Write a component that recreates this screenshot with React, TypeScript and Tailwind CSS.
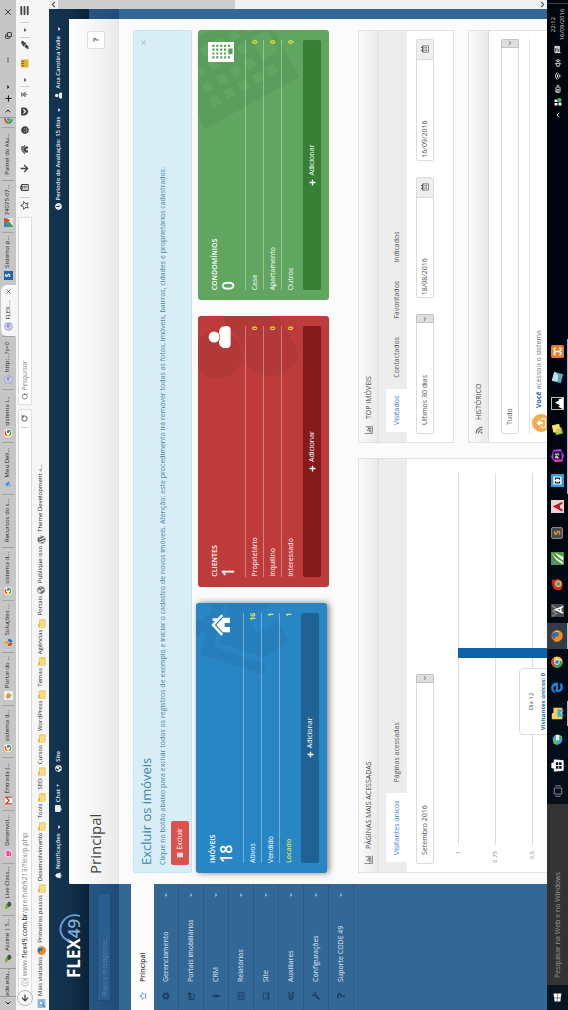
import React from "react";
import {
  FaBell, FaCaretDown, FaChartBar, FaClock, FaCog, FaCogs, FaCommentAlt, FaEdgeLegacy, FaGlobeAmericas, FaHome,
  FaLaptop, FaMale, FaPlus, FaQuestion, FaRegCalendarAlt, FaRegListAlt, FaRegStar, FaRss, FaTrashAlt, FaUser, FaWindows,
  FaWordpress, FaWrench, FaArrowDown, FaArrowLeft, FaShareSquare, FaSmile, FaGetPocket, FaEyeDropper, FaThumbtack,
} from "react-icons/fa";
import { FcGoogle } from "react-icons/fc";
import {
  BatteryMedium, ChevronDown, ChevronLeft, ChevronRight, ChevronUp, ClipboardList, Copy, Info, Menu, MessageSquareText, Minus,
  Plus, RotateCw, Search, Volume2, Wifi, X,
} from "lucide-react";

type Children = { children?: React.ReactNode };

function Svg({ className, children }: Children & { className: string }) {
  return (
    <svg viewBox="0 0 16 16" className={className} aria-hidden="true">
      {children}
    </svg>
  );
}

const Folder = () => (
  <Svg className="size-[9px]">
    <path d="M1 2h6l1 2h7v11H1z" fill="#e0b83c" />
    <path d="M2 5h12v9H2z" fill="#f5dd80" />
  </Svg>
);

const BarsIcon = () => (
  <Svg className="size-[9px]">
    <path d="M1 1v14h14" fill="none" stroke="#777" strokeWidth="1.500" />
    <path d="M4 9v4M7 5v8M10 7v6M13 3v10" stroke="#777" strokeWidth="2" />
  </Svg>
);

const FirefoxIcon = ({ className }: { className: string }) => (
  <Svg className={className}>
    <circle cx="8" cy="8" r="7.5" fill="#e66a17" />
    <circle cx="9" cy="6.5" r="5" fill="#2b6fb5" />
    <path d="M1 4c1 1 2 1 4 1 2 0 4 2 2 3 1 3 5 3 7 0 1-2 0-4-1-5 4 3 3 8 0 11-4 3-9 1-11-2C0 9 0 6 1 4z" fill="#f28a1c" />
    <path d="M12 2c3 3 4 7 1 10 1-4 0-7-1-10z" fill="#fbc93d" />
  </Svg>
);

const ChromeIcon = ({ className }: { className: string }) => (
  <Svg className={className}>
    <circle cx="8" cy="8" r="7.5" fill="#fbcf3b" />
    <path d="M8 8 1.5 4.2A7.5 7.5 0 0 1 14.5 4.3H8z" fill="#df4435" />
    <path d="M8 8 1.5 4.2A7.5 7.5 0 0 0 8 15.5L11 9.500z" fill="#30a350" />
    <circle cx="8" cy="8" r="3.600" fill="#fff" />
    <circle cx="8" cy="8" r="2.800" fill="#3f84ee" />
  </Svg>
);

const Ring = () => (
  <Svg className="size-[9px]">
    <circle cx="8" cy="8" r="7" fill="#d4d4ee" stroke="#8285b8" />
    <path d="M4 10 8 5v6M9 6h3v5M9 8.500h3" stroke="#6568a6" fill="none" />
  </Svg>
);

const Sprout = () => (
  <Svg className="size-[9px]">
    <path d="M1 3c6-3 10 1 11 5C8 10 3 9 1 3z" fill="#7fae3c" />
    <path d="M5 8c5-4 8-2 10 1-2 5-8 6-10-1z" fill="#46543e" />
  </Svg>
);

type Tab = { label: string; icon?: React.ReactNode; active?: boolean };

const tabs: Tab[] = [
  { label: "Assine | S...", icon: <Sprout /> },
  { label: "Live Class...", icon: <Sprout /> },
  {
    label: "Desenvol...",
    icon: (
      <Svg className="size-[9px]">
        <circle cx="8" cy="8" r="7.500" fill="#f7c6dc" />
        <path d="M5 11c4 2 7-2 6-6-4 0-7 2-6 6zM4 5l4 4" stroke="#d8347c" strokeWidth="2" fill="none" />
      </Svg>
    ),
  },
  {
    label: "Entrada (...",
    icon: (
      <Svg className="size-[9px]">
        <path d="M1 3h14v11H1z" fill="#fff" />
        <path d="M2 14V4l6 5 6-5v10" stroke="#d5392c" strokeWidth="2.500" fill="none" />
      </Svg>
    ),
  },
  { label: "sistema d...", icon: <FcGoogle className="size-2 rounded-full bg-white" /> },
  {
    label: "Portal do ...",
    icon: (
      <Svg className="size-[9px]">
        <path d="M0 0h16v16H0z" fill="#f4efe0" />
        <path d="m2 6 5-3 6 4-4 7-4-3z" fill="#c3a55c" />
      </Svg>
    ),
  },
  {
    label: "Soluções ...",
    icon: (
      <Svg className="size-[9px]">
        <path d="M8 0c4 5 3 8 0 9C5 8 5 5 8 0z" fill="#e9a21d" />
        <path d="M2 7c5 0 6 3 5 8-4-1-6-3-5-8z" fill="#d9472b" />
        <path d="M14 7c-5 0-6 3-5 8 4-1 6-3 5-8z" fill="#2973c7" />
      </Svg>
    ),
  },
  { label: "sistema d...", icon: <FcGoogle className="size-2 rounded-full bg-white" /> },
  { label: "Recursos do s..." },
  {
    label: "Meu Deli...",
    icon: (
      <Svg className="size-[9px]">
        <path d="m4 6 5-4 5 7-4 1z" fill="#3f92dd" />
        <path d="m3 8 5 2-2 4z" fill="#76b5ec" />
      </Svg>
    ),
  },
  { label: "sistema i...", icon: <FcGoogle className="size-2 rounded-full bg-white" /> },
  { label: "http:...?s=0", icon: <Ring /> },
  { label: "FLEX ...", icon: <Ring />, active: true },
  {
    label: "Sistema p...",
    icon: <span className="flex size-[9px] items-center justify-center bg-[#1d64a8] text-[7px] font-bold text-white">S</span>,
  },
  {
    label: "74075-07...",
    icon: (
      <Svg className="size-[9px]">
        <path d="M0 0h16v16H0z" fill="#45a254" />
        <path d="M0 9 9 0H0z" fill="#3f7de0" />
        <path d="m2 16 14-13v13z" fill="#e9e5dc" />
        <path d="M9 1h6v5l-3 5-3-5z" fill="#dd4232" />
      </Svg>
    ),
  },
  { label: "Painel do Alu..." },
];

function TabStrip() {
  return (
    <div className="flex h-4 items-stretch bg-[#c6c6c6] text-[#222]">
      <button aria-label="Rolar abas" className="flex w-[13px] items-center justify-center">
        <ChevronLeft className="size-2" strokeWidth={3} />
      </button>
      <div className="flex w-[29px] items-center justify-center border-x border-[#999]">ade.edu...</div>
      <div className="flex min-w-0 flex-1">
        {tabs.map((t, i) => (
          <div
            key={i}
            className={
              t.active
                ? "mt-px flex min-w-0 flex-1 items-center gap-[3px] rounded-t-md bg-[#f6f6f6] pl-[5px]"
                : "my-0.5 flex min-w-0 flex-1 items-center gap-[3px] border-r border-[#a4a4a4] pl-[5px]"
            }
          >
            {t.icon}
            <span className="whitespace-nowrap">{t.label}</span>
            {t.active && <X className="ml-0.5 size-[7px]" />}
          </div>
        ))}
      </div>
      <div className="flex w-[9px] items-center overflow-hidden pl-[3px]">
        <ChromeIcon className="size-[9px] shrink-0" />
      </div>
      <div className="flex w-[118px] items-center border-l border-[#999]">
        <button aria-label="Próximas abas" className="flex w-3 justify-center">
          <ChevronRight className="size-2" strokeWidth={3} />
        </button>
        <button aria-label="Nova aba" className="flex w-3 justify-center">
          <Plus className="size-[9px]" strokeWidth={3} />
        </button>
        <button aria-label="Listar abas" className="flex w-3 justify-center">
          <FaCaretDown className="size-1.5" />
        </button>
        <span className="flex-1" />
        <button aria-label="Minimizar" className="flex w-6 justify-center">
          <Minus className="size-2" />
        </button>
        <button aria-label="Restaurar" className="flex w-6 justify-center">
          <Copy className="size-[7px]" strokeWidth={3} />
        </button>
        <button aria-label="Fechar" className="flex w-6 justify-center">
          <X className="size-[10px]" />
        </button>
      </div>
    </div>
  );
}

function NavBar() {
  return (
    <div className="flex h-[17px] items-center bg-[#f6f6f6] text-[#444]">
      <button
        aria-label="Voltar"
        className="z-10 ml-1 -mr-1 flex size-4 items-center justify-center rounded-full border border-[#b5b5b5] bg-[#fafafa]"
      >
        <FaArrowLeft className="size-2" />
      </button>
      <div className="flex h-3.5 flex-1 items-center border border-[#dedede] bg-white pl-1.5">
        <Info className="size-2 text-[#999]" />
        <span className="border-l border-[#ccc] pl-0.5 text-[7px] text-[#888]">
          www.<b className="font-normal text-[#111]">flex49.com.br</b>/pre/hab9213/flex/p.php
        </span>
        <button aria-label="Atualizar" className="ml-auto flex w-[18px] items-center justify-center border-l border-[#ccc]">
          <RotateCw className="size-[7px]" strokeWidth={3} />
        </button>
      </div>
      <label className="ml-1 flex h-3.5 w-[188px] items-center border border-[#dedede] bg-white pl-1">
        <Search className="size-2" />
        <input aria-label="Pesquisar" placeholder="Pesquisar" className="ml-0.5 w-full text-[7px] italic outline-none placeholder:text-[#888]" />
      </label>
      <div className="ml-1 flex items-center [&>button]:flex [&>button]:h-2.5 [&>button]:items-center [&>button]:justify-center">
        <button aria-label="Favoritar" className="w-4 border-r border-[#ccc]"><FaRegStar className="size-[9px]" /></button>
        <button aria-label="Lista" className="w-[19px]"><ClipboardList className="size-[9px]" strokeWidth={3} /></button>
        <button aria-label="Downloads" className="w-[19px]"><FaArrowDown className="size-[9px]" /></button>
        <button aria-label="Início" className="w-[19px]"><FaHome className="size-[9px]" /></button>
        <button aria-label="Hello" className="w-[19px]"><FaSmile className="size-2" /></button>
        <button aria-label="Pocket" className="w-[19px]"><FaGetPocket className="size-[9px]" /></button>
        <button aria-label="Extensão" className="w-4 border-r border-[#ccc]"><FaThumbtack className="size-[7px] text-[#888]" /></button>
        <button aria-label="Opções da extensão" className="w-3"><FaCaretDown className="size-1.5" /></button>
        <button aria-label="Régua" className="w-[21px]">
          <Svg className="size-[9px]">
            <path d="M1 2h14v13H1z" fill="#e3ae35" />
            <path d="M4 2v5M8 2v5M12 2v5" stroke="#7b5a10" strokeWidth="1.500" />
          </Svg>
        </button>
        <button aria-label="Conta-gotas" className="w-4 border-r border-[#ccc]"><FaEyeDropper className="size-2" /></button>
        <button aria-label="Opções de cor" className="w-[15px] border-r border-[#ccc]"><FaCaretDown className="size-1.5" /></button>
        <button aria-label="Menu" className="w-[22px]"><Menu className="size-[11px]" strokeWidth={4} /></button>
      </div>
    </div>
  );
}

const bookmarks: { label: string; icon?: React.ReactNode }[] = [
  {
    label: "Mais visitados",
    icon: (
      <Svg className="size-[9px]">
        <path d="M0 1h16v14H0z" fill="#8fbbe0" />
        <circle cx="9" cy="7" r="3.500" fill="#e8f2fa" stroke="#3a6ea5" />
        <path d="m6 10-4 4" stroke="#3a6ea5" strokeWidth="2" />
      </Svg>
    ),
  },
  { label: "Primeiros passos", icon: <FirefoxIcon className="size-[9px]" /> },
  { label: "Desenvolvimento" },
  { label: "Tools" },
  { label: "SEO" },
  { label: "Cursos" },
  { label: "WordPress" },
  { label: "Temas" },
  { label: "Agências" },
  { label: "Portais" },
  { label: "Publique isso", icon: <FaGlobeAmericas className="size-2 text-[#777]" /> },
  { label: "Theme Development «...", icon: <FaWordpress className="size-[9px] text-[#555]" /> },
];

function Bookmarks() {
  return (
    <nav className="flex h-4 items-center gap-0.5 bg-[#f6f6f6] px-0.5 text-[#222]">
      {bookmarks.map((b) => (
        <a key={b.label} href="#" className="flex items-center gap-[3px] whitespace-nowrap">
          {b.icon ?? <Folder />}
          {b.label}
        </a>
      ))}
    </nav>
  );
}

const menu = [
  { label: "Gerenciamento", Icon: FaCog },
  { label: "Portais imobiliários", Icon: FaShareSquare },
  { label: "CRM", Icon: FaMale },
  { label: "Relatórios", Icon: FaRegListAlt },
  { label: "Site", Icon: FaLaptop },
  { label: "Auxiliares", Icon: FaCogs },
  { label: "Configurações", Icon: FaWrench },
  { label: "Suporte CODE 49", Icon: FaQuestion },
];

function Sidebar() {
  return (
    <aside className="w-[126px] shrink-0 text-[7px]">
      <div className="flex h-10 items-end pl-8">
        <svg viewBox="0 0 66 30" className="h-[30px] w-[66px] overflow-visible" role="img" aria-label="FLEX49">
          <text x="0" y="21" fontFamily="Open Sans, sans-serif" fontSize="17" fontWeight="700" fill="#fff">
            FLEX
            <tspan fontWeight="600" fill="#86aed6">49</tspan>
          </text>
          <path d="M37 11C39 3 47-1 55 3c7 4 9 11 7 18" fill="none" stroke="#6f9fd0" strokeWidth="1.800" />
        </svg>
      </div>
      <div className="h-[30px] px-[9px] pt-2">
        <input
          aria-label="Busca Inteligente"
          placeholder="Busca Inteligente..."
          className="block h-3.5 w-full border border-[#1e4a76] bg-[#2a5d90] px-1 text-[7px] text-white outline-none placeholder:text-[#5580a8]"
        />
      </div>
      <nav className="pt-3 text-[#e1eaf3]">
        <a href="#" className="flex h-[23px] items-center bg-[#fbfbfb] pl-2.5 font-semibold text-[#444]">
          <FaRegStar className="size-2 text-[#4b85c8]" />
          <span className="ml-2.5">Principal</span>
        </a>
        {menu.map(({ label, Icon }) => (
          <a key={label} href="#" className="flex h-[25px] items-center border-b border-[#2b5a8a] pr-2 pl-2.5">
            <Icon className="size-2 text-[#1b4066]" />
            <span className="ml-2.5">{label}</span>
            <FaCaretDown className="ml-auto size-1.5 text-[#9db9d6]" />
          </a>
        ))}
      </nav>
    </aside>
  );
}

function TopBar() {
  return (
    <div className="flex h-5 items-center pr-[7px] pl-[5px] text-[6px] font-semibold text-[#e6edf3]">
      <a href="#" className="flex items-center gap-[3px]"><FaBell className="size-[7px]" />Notificações<FaCaretDown className="size-1.5" /></a>
      <a href="#" className="ml-3 flex items-center gap-[3px]"><FaCommentAlt className="size-[7px]" />Chat +</a>
      <a href="#" className="ml-3 flex items-center gap-[3px]"><FaGlobeAmericas className="size-[7px]" />Site</a>
      <a href="#" className="ml-auto flex items-center gap-[3px]"><FaClock className="size-[7px]" />Período de Avaliação: 15 dias<FaCaretDown className="ml-px size-1.5" /></a>
      <a href="#" className="ml-2 flex items-center gap-[3px]"><FaUser className="size-[7px]" />Ana Carolina Valle<FaCaretDown className="ml-px size-1.5" /></a>
    </div>
  );
}

const HouseShape = () => (
  <>
    <path d="M8 1 0 8.500l1.200 1.300L8 3.600l6.800 6.200L16 8.500l-3-2.800V2h-2v1.800z" />
    <path d="M8 4.800 2.500 9.800V15h4v-4h3v4h4V9.800z" />
  </>
);
const UserShape = () => (
  <>
    <circle cx="8" cy="4" r="4" />
    <path d="M0 13c0-4 2-5.500 5-5.500 2 1.300 4 1.300 6 0 3 0 5 1.500 5 5.500 0 2-1 3-3 3H3c-2 0-3-1-3-3z" />
  </>
);
const BuildingShape = () => (
  <path
    fillRule="evenodd"
    d="M1 0h14v18H1zM3.500 3v1.500h1.500V3zM6.200 3v1.500h1.500V3zM8.900 3v1.500h1.500V3zM11.500 3v1.500H13V3zM3.500 5.700v1.500h1.500V5.700zM6.200 5.700v1.500h1.500V5.700zM8.900 5.700v1.500h1.500V5.700zM11.500 5.700v1.500H13V5.700zM3.500 8.400v1.500h1.500V8.400zM6.200 8.400v1.500h1.500V8.400zM8.900 8.400v1.500h1.500V8.400zM11.500 8.400v1.500H13V8.400zM3.500 11.100v1.500h1.500v-1.500zM6.200 11.100v1.500h1.500v-1.500zM8.900 11.100v1.500h1.500v-1.500zM11.500 11.100v1.500H13v-1.500zM3.500 13.800v1.500h1.500v-1.500zM6.500 14v3h4v-3zM11.500 13.800v1.500H13v-1.500z"
  />
);

type CardProps = {
  title: string;
  total: number;
  rows: [string, number][];
  tone: string;
  button: string;
  shape: React.ReactNode;
  markClass: string;
  iconClass: string;
  highlight?: boolean;
};

function StatCard({ title, total, rows, tone, button, shape, markClass, iconClass, highlight }: CardProps) {
  return (
    <section className={`relative h-[131px] flex-1 overflow-hidden rounded-[3px] px-2.5 pt-2.5 text-[7px] text-white ${tone}`}>
      <svg viewBox="0 0 16 18" className={`absolute -rotate-[29deg] fill-black/5 ${markClass}`} aria-hidden="true">
        {shape}
      </svg>
      <div className="relative flex h-[37px] justify-between">
        <div>
          <h3 className="text-[7px] leading-[13px] font-semibold">{title}</h3>
          <p className="text-[16px] leading-[14px] font-semibold">{total}</p>
        </div>
        <svg viewBox="0 0 16 18" className={`fill-white ${iconClass}`} aria-hidden="true">
          {shape}
        </svg>
      </div>
      <dl className="relative">
        {rows.map(([label, n], i) => (
          <div key={label} className="flex h-[18px] items-center justify-between border-t border-white/35">
            <dt className={highlight && i === 2 ? "font-semibold text-[#d5e04c]" : ""}>{label}</dt>
            <dd className="font-bold text-[#e6e03a]">{n}</dd>
          </div>
        ))}
      </dl>
      <button className={`relative mt-1 flex h-[18px] w-full items-center justify-center gap-[3px] rounded-[2px] ${button}`}>
        <FaPlus className="size-[7px]" />
        Adicionar
      </button>
    </section>
  );
}

function Panel({ title, icon, className, children }: Children & { title: string; icon: React.ReactNode; className: string }) {
  return (
    <section className={`flex flex-col border border-[#e2e2e2] bg-white ${className}`}>
      <h3 className="flex h-5 shrink-0 items-center gap-1.5 border-b border-[#dcdcdc] bg-linear-to-b from-[#fbfbfb] to-[#e9e9e9] pl-2 text-[7px] text-[#444]">
        {icon}
        {title}
      </h3>
      {children}
    </section>
  );
}

function PanelTabs({ items }: { items: string[] }) {
  return (
    <div role="tablist" className="flex h-7 shrink-0 items-end gap-1 bg-[#ededed] pl-2.5 text-[7px] text-[#555]">
      {items.map((t, i) => (
        <button
          key={t}
          role="tab"
          aria-selected={i === 0}
          className={i === 0 ? "h-[21px] rounded-t-[2px] bg-white px-[7px] text-[#2f7bd0]" : "h-[21px] px-[7px]"}
        >
          {t}
        </button>
      ))}
    </div>
  );
}

function Select({ label, value, className }: { label: string; value: string; className: string }) {
  return (
    <div className={`relative h-[18px] ${className}`}>
      <select
        aria-label={label}
        className="block h-full w-full appearance-none rounded-[2px] border border-[#dcdcdc] bg-white pl-2 text-[7px] text-[#555] outline-none"
      >
        <option>{value}</option>
      </select>
      <span className="pointer-events-none absolute inset-y-0 right-0 flex w-[9px] items-center justify-center rounded-r-[2px] border border-[#c2c2c2] bg-[#dedede]">
        <ChevronDown className="size-1.5 text-[#444]" strokeWidth={3} />
      </span>
    </div>
  );
}

function DateField({ label, value }: { label: string; value: string }) {
  return (
    <div className="flex h-[18px] flex-1 rounded-[2px] border border-[#dcdcdc]">
      <input aria-label={label} defaultValue={value} className="w-0 flex-1 pl-0.5 text-[7px] text-[#555] outline-none" />
      <button aria-label="Abrir calendário" className="flex w-5 items-center justify-center border-l border-[#dcdcdc] bg-[#eee]">
        <FaRegCalendarAlt className="size-2 text-[#666]" />
      </button>
    </div>
  );
}

function PagesChart() {
  return (
    <div className="relative mt-[17px] pr-3.5 text-[6px] text-[#888]">
      {["1", "0.75", "0.5"].map((t) => (
        <div key={t} className="flex h-[37px]">
          <span className="-mt-1 w-[27px] pr-1.5 text-right leading-[8px]">{t}</span>
          <span className="flex-1 border-t border-[#dedede]" />
        </div>
      ))}
      <div className="absolute top-0 left-[214px] h-[120px] w-2.5 bg-[#0d62a8]" />
      <div className="absolute top-[61px] left-[137px] h-10 w-[67px] rounded-[4px] border border-[#ddd] bg-white pt-[5px] text-center">
        <p className="leading-[12px] text-[#444]">Dia 12</p>
        <p className="leading-[12px] font-bold whitespace-nowrap text-[#2b6ba8]">Visitantes únicos: 0</p>
      </div>
    </div>
  );
}

function Main() {
  return (
    <main className="flex min-h-0 flex-1 flex-col overflow-hidden rounded-tl-[2px] bg-[#fbfbfb]">
      <header className="flex h-[50px] shrink-0 items-center justify-between border-b border-[#e6e6e6] bg-linear-to-b from-white to-[#ebebeb] pr-3 pl-2.5">
        <h1 className="pt-1 text-[15px] text-[#444]">Principal</h1>
        <button aria-label="Ajuda" className="mt-1 flex size-[18px] items-center justify-center rounded-[2px] border border-[#ddd] bg-white">
          <FaQuestion className="size-1.5 text-[#777]" />
        </button>
      </header>
      <div className="flex min-h-0 flex-1 flex-col px-[11px] pt-3.5">
        <section className="relative h-[59px] shrink-0 rounded-[2px] border border-[#bce8f1] bg-[#d9edf7] pt-1 pl-[7px] text-[7px] text-[#3a87ad]">
          <h2 className="text-[13px] leading-[16px]">Excluir os imóveis</h2>
          <p className="mt-1 leading-[10px] whitespace-nowrap">
            Clique no botão abaixo para excluir todos os registros de exemplo e iniciar o cadastro de novos imóveis. Atenção: este
            procedimento irá remover todas as fotos, imóveis, bairros, cidades e proprietários cadastrados.
          </p>
          <button className="mt-[3px] flex h-[18px] w-11 items-center justify-center gap-0.5 rounded-[2px] bg-[#d9534f] text-[7px] text-white">
            <FaTrashAlt className="size-1.5" />
            Excluir
          </button>
          <button aria-label="Fechar aviso" className="absolute top-1.5 right-2 text-[#9aaab2]">
            <X className="size-[7px]" strokeWidth={3} />
          </button>
        </section>
        <div className="mt-1.5 flex shrink-0 gap-4">
          <StatCard
            title="IMÓVEIS"
            total={18}
            rows={[["Ativos", 16], ["Vendido", 1], ["Locado", 1]]}
            tone="-mt-0.5 bg-[#2986c4] shadow-[0_2px_6px_rgba(0,0,0,0.5)]"
            button="bg-[#206393]"
            shape={<HouseShape />}
            markClass="-top-2 right-[-20px] h-[108px] w-24"
            iconClass="mt-1 h-6 w-6"
            highlight
          />
          <StatCard
            title="CLIENTES"
            total={1}
            rows={[["Proprietário", 0], ["Inquilino", 0], ["Interessado", 0]]}
            tone="bg-[#bd3b3b]"
            button="bg-[#841b1b]"
            shape={<UserShape />}
            markClass="-top-2 right-[-24px] h-[108px] w-24"
            iconClass="h-[26px] w-[22px]"
          />
          <StatCard
            title="CONDOMÍNIOS"
            total={0}
            rows={[["Casa", 0], ["Apartamento", 0], ["Outros", 0]]}
            tone="bg-[#60a661]"
            button="bg-[#367f35]"
            shape={<BuildingShape />}
            markClass="-top-5 right-[-12px] h-[108px] w-24"
            iconClass="h-[26px] w-6"
          />
        </div>
        <div className="mt-[29px] flex min-h-0 flex-1 gap-[15px]">
          <Panel title="PÁGINAS MAIS ACESSADAS" icon={<BarsIcon />} className="flex-1 border-b-0">
            <PanelTabs items={["Visitantes únicos", "Páginas acessadas"]} />
            <div className="px-2 pt-[9px]">
              <Select label="Período" value="Setembro 2016" className="w-[190px]" />
            </div>
            <div className="pt-[7px]"><PagesChart /></div>
          </Panel>
          <div className="flex min-h-0 flex-1 flex-col gap-3.5">
            <Panel title="TOP IMÓVEIS" icon={<BarsIcon />} className="h-24 shrink-0">
              <PanelTabs items={["Visitados", "Contactados", "Favoritados", "Indicados"]} />
              <div className="flex gap-4 px-2 pt-[9px]">
                <Select label="Intervalo" value="Últimos 30 dias" className="flex-1" />
                <DateField label="Data inicial" value="18/08/2016" />
                <DateField label="Data final" value="16/09/2016" />
              </div>
            </Panel>
            <Panel title="HISTÓRICO" icon={<FaRss className="size-2 text-[#777]" />} className="min-h-0 flex-1 border-b-0">
              <div className="px-2 pt-3">
                <Select label="Filtro" value="Tudo" className="w-full" />
                <div className="mt-2.5 flex items-center gap-1.5 border-t border-[#e4e4e4] pt-0.5 pl-0.5 text-[7px] text-[#777]">
                  <span className="flex size-[18px] items-center justify-center rounded-full bg-[#f0ad4e] text-white">
                    <Svg className="size-2.5">
                      <path d="M8 1 3 6h3v5h4V6h3z" fill="#fff" />
                      <path d="M4 9H1v6h14V9h-3" fill="none" stroke="#fff" strokeWidth="1.500" />
                    </Svg>
                  </span>
                  <p className="-mt-1">
                    <b className="text-[#2a6ba8]">Você</b> acessou o sistema
                  </p>
                </div>
              </div>
            </Panel>
          </div>
        </div>
      </div>
    </main>
  );
}

const square = "size-[13px]";

const apps: { name: string; icon: React.ReactNode; open?: boolean; active?: boolean }[] = [
  {
    name: "Loja",
    icon: (
      <Svg className={square}>
        <path d="M5 4V1h6v3M1 4h14l-1 11H2z" fill="#fff" stroke="#fff" />
        <path d="M4 6h3.500v3H4zM8.500 6H12v3H8.500zM4 10h3.500v3H4zM8.500 10H12v3H8.500z" fill="#07111c" />
      </Svg>
    ),
  },
  {
    name: "Rede",
    icon: (
      <Svg className={square}>
        <circle cx="8" cy="8" r="6" fill="#3aa0dc" />
        <path d="M3 3h5v5H1zM9 10l5-2-2 6z" fill="#5cc04a" />
        <path d="M7 6h7v4H7z" fill="#eaf4fb" />
      </Svg>
    ),
  },
  {
    name: "Explorador",
    open: true,
    icon: (
      <Svg className={square}>
        <path d="M1 1h7l1 2h6v11H1z" fill="#f5ce5b" />
        <path d="M4 8h9v7h-3v-3H7v3H4z" fill="#2fb2e8" />
      </Svg>
    ),
  },
  { name: "Edge", icon: <FaEdgeLegacy className="size-3 text-[#1e82e0]" /> },
  { name: "Chrome", icon: <ChromeIcon className="size-3" /> },
  { name: "Firefox", icon: <FirefoxIcon className="size-3" />, open: true, active: true },
  {
    name: "Awesomium",
    icon: (
      <Svg className={square}>
        <path d="M0 0h16v16H0z" fill="#4a4a4a" />
        <path d="m1 1 3 6 3-5 3 5 4-6" fill="none" stroke="#8d8d8d" strokeWidth="1.500" />
        <path d="m5 15 4-9 4 9M6.500 12h5" fill="none" stroke="#fff" strokeWidth="2" />
      </Svg>
    ),
  },
  {
    name: "Dragon",
    icon: (
      <Svg className={square}>
        <path d="M1 9C1 3 6 0 15 2c-3 1-1 3 0 6-1 5-6 7-9 6-3 0-5-2-5-5z" fill="#d32b2b" />
        <circle cx="9" cy="9" r="4" fill="#e8c24a" />
        <circle cx="9" cy="9" r="2.500" fill="#2fa7a0" />
      </Svg>
    ),
  },
  {
    name: "Corel",
    icon: (
      <Svg className={square}>
        <path d="M0 0h16v16H0z" fill="#4c9b3f" />
        <path d="M15 1C9 3 3 9 1 15l3-1C7 8 10 4 15 1zM15 5c-4 2-7 6-9 10h4z" fill="#fff" />
        <path d="M1 2h5L2 7z" fill="#4a8ed0" />
      </Svg>
    ),
  },
  {
    name: "Sublime",
    icon: (
      <span className="flex size-3 items-center justify-center rounded-[2px] border border-[#888] bg-[#4b4b4b] text-[9px] font-bold text-[#f09a33]">
        S
      </span>
    ),
  },
  {
    name: "AutoCAD",
    icon: (
      <Svg className={square}>
        <path d="M0 0h16v16H0z" fill="#ecd2d2" />
        <path d="M8 2 14 14h-3l-1-3H6l-1 3H2z" fill="#b31b25" />
      </Svg>
    ),
  },
  {
    name: "Brackets",
    open: true,
    icon: (
      <Svg className={square}>
        <path d="M0 0h16v16H0z" fill="#2b9ee0" />
        <path d="M3 3h10v10H3z" fill="#fff" />
        <path d="M7 5.500H5v5h2M9 5.500h2v5H9" stroke="#222" strokeWidth="1.500" fill="none" />
      </Svg>
    ),
  },
  {
    name: "PhpStorm",
    open: true,
    icon: (
      <Svg className={square}>
        <path d="m0 5 6-5 9 3 1 9-8 4-7-2z" fill="#a53cf0" />
        <path d="m0 5 5-4 3 6-7 8z" fill="#ec3fb0" />
        <path d="M3 3h10v10H3z" fill="#120a18" />
        <text x="4" y="9.500" fontSize="6" fontWeight="700" fill="#fff" fontFamily="Open Sans, sans-serif">PS</text>
      </Svg>
    ),
  },
  {
    name: "Notas",
    open: true,
    icon: (
      <Svg className={square}>
        <path d="m1 6 8-2 2 9-8 2z" fill="#63a844" />
        <path d="m4 3 9-2 2 9-9 2z" fill="#f2e26a" />
        <path d="m2 7 6-1 2 6-6 1z" fill="#d9c650" />
      </Svg>
    ),
  },
  {
    name: "Inkscape",
    open: true,
    icon: (
      <Svg className={square}>
        <path d="M.5.500h15v15H.5z" fill="#05080e" stroke="#fff" />
        <path d="m1 15 3-6 2 2 3-6 3 5 1-1 2 6z" fill="#fff" />
      </Svg>
    ),
  },
  {
    name: "Virtual",
    open: true,
    icon: (
      <Svg className={square}>
        <path d="m4 1 11 3-3 11L1 12z" fill="#5ba9bd" />
        <path d="m4 1 11 3-4 5-8-1z" fill="#c0e3ea" />
      </Svg>
    ),
  },
  {
    name: "XAMPP",
    open: true,
    icon: (
      <Svg className={square}>
        <rect width="16" height="16" rx="2" fill="#ec7a2c" />
        <path d="M4 4c2-1 4 0 4 4s2 5 4 4M12 4c-2-1-4 0-4 4s-2 5-4 4M4 4v2M12 4v2M4 12v-2M12 12v-2" stroke="#fff" strokeWidth="1.800" fill="none" />
      </Svg>
    ),
  },
];

function Taskbar() {
  return (
    <footer className="flex h-[21px] shrink-0 items-stretch bg-linear-to-r from-[#081622] to-[#01050d] to-60% text-white">
      <button aria-label="Iniciar" className="flex w-[25px] items-center justify-center">
        <FaWindows className="size-[9px]" />
      </button>
      <input
        aria-label="Pesquisar na Web e no Windows"
        placeholder="Pesquisar na Web e no Windows"
        className="w-[181px] bg-[#333] pl-[7px] text-[7px] outline-none placeholder:text-[#999]"
      />
      <button aria-label="Visão de tarefas" className="flex w-[26px] items-center justify-center">
        <Svg className="size-3">
          <path d="M4 3h8v10H4zM2 5H1v6h1M14 5h1v6h-1" fill="none" stroke="#aaa" />
        </Svg>
      </button>
      <div className="flex w-[439px]">
        {apps.map((a) => (
          <button
            key={a.name}
            aria-label={a.name}
            className={
              a.active
                ? "flex flex-1 items-center justify-center border-b border-[#9cc8ec] bg-[#333d47]"
                : a.open
                  ? "flex flex-1 items-center justify-center border-b border-[#8fbfe6]"
                  : "flex flex-1 items-center justify-center border-b border-transparent"
            }
          >
            {a.icon}
          </button>
        ))}
      </div>
      <div className="ml-auto flex items-center gap-[5px] text-[#ddd]">
        <ChevronUp className="size-2" strokeWidth={3} />
        <Svg className="size-2">
          <path d="M1 1h5v6H1zM8 1h5v6H8zM1 9h6v6H1z" fill="#eee" />
          <circle cx="12" cy="11" r="4" fill="#3fc157" />
        </Svg>
        <BatteryMedium className="size-2" strokeWidth={3} />
        <Wifi className="size-2" strokeWidth={3} />
        <Volume2 className="size-2" strokeWidth={3} />
        <MessageSquareText className="size-[9px] fill-white text-[#05080e]" />
      </div>
      <time className="mr-[3px] flex w-[42px] flex-col items-center justify-center border-r border-[#444] text-[6px] leading-[9px] text-[#ddd]">
        <span>22:12</span>
        <span>16/09/2016</span>
      </time>
    </footer>
  );
}

export default function App() {
  return (
    <div className="h-screen w-screen overflow-hidden bg-black">
      <div className="flex h-[100vw] w-[100vh] origin-top-left translate-y-[100vh] -rotate-90 flex-col font-['Open_Sans',sans-serif] text-[6px] leading-[1.3]">
        <TabStrip />
        <NavBar />
        <Bookmarks />
        <div className="flex min-h-0 flex-1 overflow-hidden">
          <div className="flex min-w-0 flex-1 bg-[linear-gradient(#12344f_0px,#12304d_20px,#0b2237_40px,#285785_40px,#1f4b77_70px,#336796_70px)]">
            <Sidebar />
            <div className="flex min-w-0 flex-1 flex-col pr-2.5">
              <TopBar />
              <Main />
            </div>
          </div>
          <div className="flex w-[9px] flex-col items-center bg-[#f0f0f0] text-[#555]">
            <ChevronUp className="size-[9px]" strokeWidth={3} />
            <div className="h-[177px] w-full bg-[#cdcdcd]" />
            <ChevronDown className="mt-auto size-[9px]" strokeWidth={3} />
          </div>
        </div>
        <Taskbar />
      </div>
    </div>
  );
}
